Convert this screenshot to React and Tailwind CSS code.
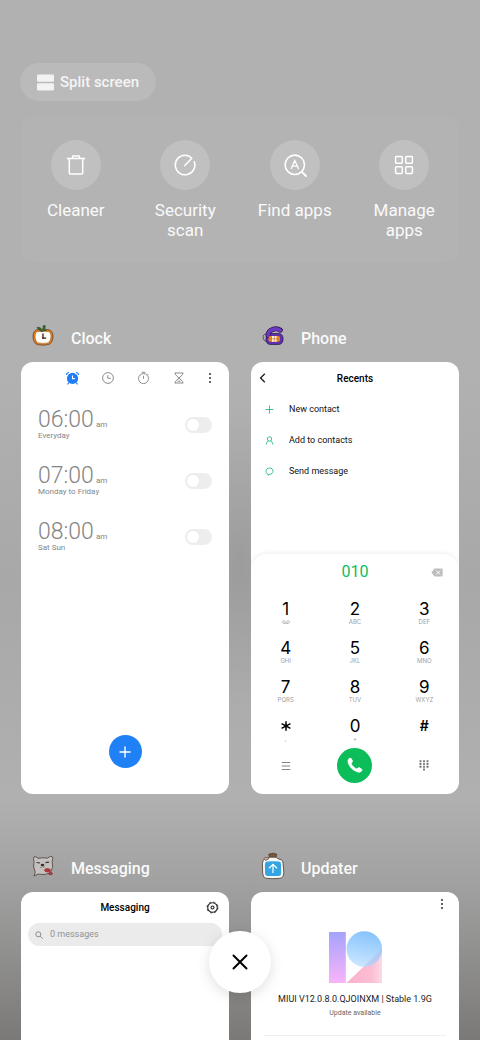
import React, { useState } from "react";

const shortcuts = [
  { label: "Cleaner", Icon: TrashIcon },
  { label: "Security scan", Icon: ScanIcon },
  { label: "Find apps", Icon: FindIcon },
  { label: "Manage apps", Icon: GridIcon },
];

const initialAlarms = [
  { id: 1, time: "06:00", period: "am", repeat: "Everyday", on: false },
  { id: 2, time: "07:00", period: "am", repeat: "Monday to Friday", on: false },
  { id: 3, time: "08:00", period: "am", repeat: "Sat Sun", on: false },
];

const keys = [
  { digit: "1", letters: "voicemail" },
  { digit: "2", letters: "ABC" },
  { digit: "3", letters: "DEF" },
  { digit: "4", letters: "GHI" },
  { digit: "5", letters: "JKL" },
  { digit: "6", letters: "MNO" },
  { digit: "7", letters: "PQRS" },
  { digit: "8", letters: "TUV" },
  { digit: "9", letters: "WXYZ" },
  { digit: "*", letters: "," },
  { digit: "0", letters: "+" },
  { digit: "#", letters: "" },
];

export default function App() {
  return (
    <div className="relative h-screen overflow-hidden bg-[linear-gradient(to_bottom,#b1b1b1_0%,#b1b1b1_36%,#a8a8a8_56%,#b0b0b0_77%,#a3a3a3_84%,#8f8f8e_92%,#7b7977_100%)] font-[Roboto,sans-serif]">
      <div className="min-h-full bg-[radial-gradient(60px_150px_at_50%_560px,rgba(0,0,0,0.08),transparent)] px-[21px] pt-[63px]">
        <button className="-ml-px flex h-[38px] items-center gap-1.5 rounded-full bg-[#bababa] px-[17px] text-[15px] font-medium text-[#f4f4f4]">
          <svg width="17" height="17" viewBox="0 0 17 17" fill="#f2f2f2">
            <rect x="0" y="0.5" width="17" height="7.3" rx="1.2" />
            <rect x="0" y="9.2" width="17" height="7.3" rx="1.2" />
          </svg>
          Split screen
        </button>

        <nav className="mt-4 grid h-[145px] grid-cols-4 rounded-xl bg-[#b3b3b3] pt-[23px]">
          {shortcuts.map(({ label, Icon }) => (
            <button
              key={label}
              className="flex flex-col items-center gap-2.5 px-3 text-[17px] leading-5 text-[#fafafa]"
            >
              <span className="flex size-[50px] shrink-0 items-center justify-center rounded-full bg-[#c0c0c0]">
                <Icon />
              </span>
              {label}
            </button>
          ))}
        </nav>

        <main className="mt-[60px] grid grid-cols-2 gap-x-[22px] gap-y-[58px]">
          <RecentApp name="Clock" icon={<PumpkinIcon />}>
            <ClockScreen />
          </RecentApp>
          <RecentApp name="Phone" icon={<TelephoneIcon />}>
            <PhoneScreen />
          </RecentApp>
          <RecentApp name="Messaging" icon={<BearIcon />}>
            <MessagingScreen />
          </RecentApp>
          <RecentApp name="Updater" icon={<BottleIcon />}>
            <UpdaterScreen />
          </RecentApp>
        </main>
      </div>

      {/* Clear all */}
      <button
        aria-label="Close all apps"
        className="absolute bottom-[47px] left-1/2 flex size-[62px] -translate-x-1/2 items-center justify-center rounded-full bg-white shadow-[0_3px_14px_rgba(0,0,0,0.13)]"
      >
        <svg width="16" height="16" viewBox="0 0 16 16" stroke="#000" strokeWidth="2" strokeLinecap="round">
          <path d="M1.5 1.5 14.5 14.5M14.5 1.5 1.5 14.5" />
        </svg>
      </button>
    </div>
  );
}

function RecentApp({ name, icon, children }) {
  return (
    <section>
      <h2 className="mb-1.5 flex h-[34px] items-center gap-4 pl-2.5 text-[16px] font-medium text-[#fafafa]">
        <span className="flex w-6 justify-center pb-1.5">{icon}</span>
        {name}
      </h2>
      <div className="flex aspect-[13/27] flex-col overflow-hidden rounded-xl bg-white">
        {children}
      </div>
    </section>
  );
}

/* ---------- Clock ---------- */

function ClockScreen() {
  const [alarms, setAlarms] = useState(initialAlarms);

  const toggle = (id) =>
    setAlarms(alarms.map((a) => (a.id === id ? { ...a, on: !a.on } : a)));

  return (
    <>
      <div className="flex h-8 items-center justify-between pl-11 pr-3 text-[#8c8c8c]">
        <div className="flex gap-[21px]">
          <button aria-label="Alarm">
            <svg width="15" height="14" viewBox="0 0 14 14">
              <circle cx="7" cy="7.4" r="5.6" fill="#1f7df5" />
              <path d="M1 3.4Q1.6 2 3 1.5M13 3.4Q12.4 2 11 1.5M3.2 11.8 2.3 13M10.8 11.8l.9 1.2" stroke="#1f7df5" strokeWidth="1.2" fill="none" strokeLinecap="round" />
              <path d="M7 4.6v3h2.4" stroke="#fff" strokeWidth="1.1" fill="none" />
            </svg>
          </button>
          <button aria-label="World clock">
            <svg width="14" height="14" viewBox="0 0 14 14" fill="none" stroke="currentColor">
              <circle cx="7" cy="7" r="5.4" />
              <path d="M6.8 4.2v3.1h3" />
            </svg>
          </button>
          <button aria-label="Stopwatch">
            <svg width="15" height="14" viewBox="0 0 14 14" fill="none" stroke="currentColor">
              <circle cx="7" cy="7.6" r="5" />
              <path d="M5.2 1.3h3.600M7 4.8v3M11 2.9l.9.9" />
            </svg>
          </button>
          <button aria-label="Timer">
            <svg width="14" height="14" viewBox="0 0 14 14" fill="none" stroke="currentColor">
              <path d="M2.6 2h8.8M2.6 12h8.8M3.4 2v1.6L10.6 10.4V12M10.6 2v1.6L3.4 10.4V12M5.4 10.2h3.2" />
            </svg>
          </button>
        </div>
        <MoreButton />
      </div>

      <ul className="flex flex-col gap-6 px-[17px] pt-[15px] text-[#858585]">
        {alarms.map((alarm) => (
          <li key={alarm.id}>
            <label className="flex h-8 items-center justify-between">
              <span>
                <span className="flex items-baseline gap-0.5">
                  <span className="text-[23px] font-light leading-[21px]">{alarm.time}</span>
                  <span className="text-[8px] leading-none">{alarm.period}</span>
                </span>
                <span className="block text-[8px] leading-[11px]">{alarm.repeat}</span>
              </span>
              <input
                type="checkbox"
                checked={alarm.on}
                onChange={() => toggle(alarm.id)}
                className="h-4 w-[27px] appearance-none rounded-full bg-[#ededed] p-0.5 before:block before:size-3 before:rounded-full before:bg-white checked:bg-[#1f7df5] checked:before:ml-[11px]"
              />
            </label>
          </li>
        ))}
      </ul>

      <button
        aria-label="Add alarm"
        className="mx-auto mb-[26px] mt-auto flex size-[33px] items-center justify-center rounded-full bg-[#2080f6]"
      >
        <svg width="12" height="12" viewBox="0 0 12 12" stroke="#fff" strokeWidth="1.4">
          <path d="M6 .5v11M.5 6h11" />
        </svg>
      </button>
    </>
  );
}

function MoreButton() {
  return (
    <button aria-label="More options">
      <svg width="14" height="14" viewBox="0 0 14 14" fill="#1a1a1a">
        <circle cx="7" cy="3" r="0.9" />
        <circle cx="7" cy="7" r="0.9" />
        <circle cx="7" cy="11" r="0.9" />
      </svg>
    </button>
  );
}

/* ---------- Phone ---------- */

function PhoneScreen() {
  const [number, setNumber] = useState("010");

  return (
    <>
      <div className="grid h-8 grid-cols-[1fr_auto_1fr] items-center px-2 text-[10px] font-medium text-black">
        <button aria-label="Back">
          <svg width="8" height="10" viewBox="0 0 8 10" fill="none" stroke="#111" strokeWidth="1.2">
            <path d="M5.8.8 1.5 5l4.3 4.2" />
          </svg>
        </button>
        <h3>Recents</h3>
      </div>

      <div className="flex flex-col text-[9px] text-[#111]">
        <button className="flex h-[31px] items-center gap-[15px] pl-3.5">
          <svg width="9" height="9" viewBox="0 0 9 9" stroke="#2cba83" strokeWidth="0.9">
            <path d="M4.5.5v8M.5 4.5h8" />
          </svg>
          New contact
        </button>
        <button className="flex h-[31px] items-center gap-[15px] pl-3.5">
          <svg width="9" height="9" viewBox="0 0 9 9" fill="none" stroke="#2cba83" strokeWidth="0.9">
            <circle cx="4.5" cy="3" r="2.2" />
            <path d="M1.2 8.5C1.300 6.300 2.600 5.200 3.600 5M7.800 8.500C7.700 6.300 6.400 5.200 5.400 5" />
          </svg>
          Add to contacts
        </button>
        <button className="flex h-[31px] items-center gap-[15px] pl-3.5">
          <svg width="9" height="9" viewBox="0 0 9 9" fill="none" stroke="#2cba83" strokeWidth="0.9">
            <path d="M3.1 7.2C1.700 6.700 1 5.500 1 4.200 1 2.300 2.500 1 4.500 1S8 2.300 8 4.200 6.500 7.300 4.800 7.300L3 8.200Z" />
          </svg>
          Send message
        </button>
      </div>

      <div className="mt-auto rounded-t-2xl pb-[11px] shadow-[0_-1px_5px_rgba(0,0,0,0.07)]">
        <div className="grid h-9 grid-cols-3 items-center">
          <output className="col-start-2 text-center text-[16px] text-[#0fbd5b]">{number}</output>
          <button
            aria-label="Delete digit"
            onClick={() => setNumber(number.slice(0, -1))}
            className="mr-4 justify-self-end"
          >
            <svg width="12" height="9" viewBox="0 0 12 9">
              <path d="M3.6.6h7.2q.8 0 .8.8v6.2q0 .8-.8.8H3.600L.4 4.500Z" fill="#bdbdbd" />
              <path d="M5.200 2.500l4 4M9.200 2.500l-4 4" stroke="#fff" strokeWidth="1" />
            </svg>
          </button>
        </div>

        <div className="mt-0.5 grid grid-cols-3">
          {keys.map(({ digit, letters }) => (
            <button
              key={digit}
              onClick={() => setNumber(number + digit)}
              className="flex h-[39px] flex-col items-center pt-2 font-[Inter,sans-serif] text-black"
            >
              {digit === "*" ? (
                <svg aria-label="*" width="18" height="18" viewBox="0 0 18 18" stroke="#000" strokeWidth="1.5">
                  <path d="M9 4.200v9.600M4.600 6.600l8.800 4.800M13.400 6.600l-8.800 4.800" />
                </svg>
              ) : (
                <span className={digit === "#" ? "text-[14px] font-semibold leading-[18px]" : "text-[17px] leading-[18px]"}>
                  {digit}
                </span>
              )}
              {letters === "voicemail" ? (
                <svg width="8" height="8" viewBox="0 0 8 8" fill="none" stroke="#a8a8a8" strokeWidth="0.7">
                  <circle cx="1.900" cy="4" r="1.400" />
                  <circle cx="6.100" cy="4" r="1.400" />
                  <path d="M1.900 5.400h4.200" />
                </svg>
              ) : (
                <span className="text-[6px] leading-2 text-[#a0a0a0]">{letters}</span>
              )}
            </button>
          ))}
        </div>

        <div className="grid grid-cols-3 items-center justify-items-center">
          <button aria-label="Menu">
            <svg width="10" height="10" viewBox="0 0 10 10" stroke="#777" strokeWidth="0.9">
              <path d="M.8 1.500h8.400M.8 5h8.400M.8 8.500h8.400" />
            </svg>
          </button>
          <button
            aria-label="Call"
            className="flex size-[35px] items-center justify-center rounded-full bg-[#0cbd5a]"
          >
            <svg width="19" height="19" viewBox="0 0 24 24" fill="#fff">
              <path d="M5.200 2.800c.9-.9 2-.8 2.700.1l1.700 2.600c.5.800.4 1.600-.2 2.300l-.9 1c-.3.400-.3.800 0 1.300 1.400 2.500 3.200 4.300 5.600 5.600.5.300.9.200 1.300-.1l1.100-.9c.7-.5 1.400-.6 2.200-.1l2.600 1.700c.9.700 1 1.800.1 2.700-1.500 1.600-3.300 2.300-5.600 1.600C9.900 18.700 5.300 14 3.500 8.300 2.800 6.100 3.500 4.300 5.200 2.800Z" />
            </svg>
          </button>
          <button aria-label="Hide keypad">
            <svg width="10" height="11" viewBox="0 0 10 11" fill="#777">
              {[1.5, 5, 8.5].map((x) =>
                [1.2, 4, 6.8].map((y) => (
                  <rect key={`${x}-${y}`} x={x - 1} y={y - 1} width="2" height="2" rx="0.4" />
                ))
              )}
              <rect x="4" y="8.600" width="2" height="2" rx="0.4" />
            </svg>
          </button>
        </div>
      </div>
    </>
  );
}

/* ---------- Messaging ---------- */

function MessagingScreen() {
  return (
    <>
      <div className="grid h-[31px] grid-cols-[1fr_auto_1fr] items-center px-2.5 text-[10px] font-medium text-black">
        <h3 className="col-start-2">Messaging</h3>
        <button aria-label="Settings" className="justify-self-end">
          <svg width="13" height="13" viewBox="0 0 13 13" fill="none" stroke="#222">
            <circle cx="6.5" cy="6.5" r="4.8" strokeWidth="1.1" />
            <circle cx="6.5" cy="6.5" r="5.5" strokeWidth="0.8" strokeDasharray="2.3 2.019" />
            <circle cx="6.5" cy="6.5" r="1.5" strokeWidth="1.1" />
          </svg>
        </button>
      </div>
      <label className="mx-[7px] flex h-[23px] items-center gap-[7px] rounded-full bg-[#ebebeb] px-[7px]">
        <svg width="8" height="8" viewBox="0 0 8 8" fill="none" stroke="#8a8a8a" strokeWidth="1">
          <circle cx="3.3" cy="3.3" r="2.5" />
          <path d="M5.2 5.2 7.6 7.6" />
        </svg>
        <input
          type="search"
          aria-label="Search messages"
          placeholder="0 messages"
          className="min-w-0 flex-1 bg-transparent text-[9px] outline-none placeholder:text-[#929292]"
        />
      </label>
    </>
  );
}

/* ---------- Updater ---------- */

function UpdaterScreen() {
  return (
    <>
      <div className="flex h-6 items-center justify-end px-2.5">
        <MoreButton />
      </div>
      <svg className="mx-auto mt-[15px]" width="53" height="52" viewBox="0 0 53 52">
        <defs>
          <linearGradient id="bar" x1="0" y1="0" x2="0" y2="1">
            <stop offset="0" stopColor="#a5a3fc" />
            <stop offset="1" stopColor="#f8b4fa" />
          </linearGradient>
          <linearGradient id="ball" x1="0.6" y1="0" x2="0.4" y2="1">
            <stop offset="0" stopColor="#86c3fd" />
            <stop offset="1" stopColor="#cbe7ff" />
          </linearGradient>
          <linearGradient id="foot" x1="0" y1="0" x2="1" y2="0">
            <stop offset="0" stopColor="#fbb2cc" />
            <stop offset="0.7" stopColor="#fcbdd3" />
            <stop offset="1" stopColor="#fdd9e5" />
          </linearGradient>
          <clipPath id="ballClip">
            <circle cx="35.3" cy="18" r="17.8" />
          </clipPath>
        </defs>
        <rect x="0" y="1" width="16.8" height="51" fill="url(#bar)" />
        <path d="M53 18v34H17.5Z" fill="url(#foot)" />
        <circle cx="35.3" cy="18" r="17.8" fill="url(#ball)" />
        <path d="M53 18v34H17.5Z" fill="#b9b4e6" opacity="0.45" clipPath="url(#ballClip)" />
      </svg>
      <p className="mt-2.5 text-center text-[9px] leading-3 text-[#1c1c1c]">
        MIUI V12.0.8.0.QJOINXM | Stable 1.9G
      </p>
      <p className="mt-0.5 text-center text-[7px] leading-3 text-[#666]">Update available</p>
      <hr className="mx-[13px] mt-4 border-[#efefef]" />
    </>
  );
}

/* ---------- Shortcut icons ---------- */

function TrashIcon() {
  return (
    <svg width="24" height="24" viewBox="0 0 24 24" fill="none" stroke="#fff" strokeWidth="1.5" strokeLinejoin="round">
      <path d="M2.800 5.600h18.400M8.600 5.400V2.900h6.800v2.500M5.300 5.800v14.100q0 1 1 1h11.400q1 0 1-1V5.800" />
    </svg>
  );
}

function ScanIcon() {
  return (
    <svg width="24" height="24" viewBox="0 0 24 24" fill="none" stroke="#fff" strokeWidth="1.5" strokeLinecap="round" strokeLinejoin="round">
      <path d="M11.800 12.600 18.800 5.300C17 3.300 14.700 2.200 12 2.200a9.800 9.800 0 1 0 9.300 6.500" />
    </svg>
  );
}

function FindIcon() {
  return (
    <svg width="24" height="24" viewBox="0 0 24 24" fill="none" stroke="#fff" strokeWidth="1.6" strokeLinecap="round">
      <circle cx="11.8" cy="11.8" r="9.7" />
      <path d="M18.800 18.800 23 23" strokeWidth="1.9" />
      <path d="M8.200 15.600 11.800 7.600 15.400 15.600M9.600 13.200h4.400" strokeWidth="1.3" />
    </svg>
  );
}

function GridIcon() {
  return (
    <svg width="24" height="24" viewBox="0 0 24 24" fill="none" stroke="#fff" strokeWidth="1.5">
      <rect x="3.6" y="3.6" width="6.7" height="6.7" rx="1" />
      <rect x="13.7" y="3.6" width="6.7" height="6.7" rx="1" />
      <rect x="3.6" y="13.7" width="6.7" height="6.7" rx="1" />
      <rect x="13.7" y="13.7" width="6.7" height="6.7" rx="1" />
    </svg>
  );
}

/* ---------- App icons ---------- */

function PumpkinIcon() {
  return (
    <svg width="22" height="22" viewBox="0 0 22 22">
      <path d="M10.4 5.500C7 3.600 1.200 4 1 11c-.1 6.200 3.200 9.400 7 8.800q3 .9 6 0c3.800.5 7-2.600 7-8.800-.2-7-6-7.400-10.600-5.500Z" fill="#e77a1a" stroke="#5b3a1c" strokeWidth="0.7" />
      <path d="M5.500 6.800q5.500-1.200 11 0 2.600.8 2.400 5-.2 4-2.400 5.900-5.500 1.500-11 0-2.200-1.900-2.400-5.900-.2-4.200 2.400-5Z" fill="#fffdf8" stroke="#6d4a2b" strokeWidth="0.4" />
      <path d="M5.200 2.200Q9 2 9.700 4.600L11 4l.3-3.600 2 .3-.4 3.500 1.300 1.300-2.700.4-2 1L8 5.200Q5.400 4.800 5.200 2.200Z" fill="#3f6a2c" stroke="#28371b" strokeWidth="0.5" />
      <path d="M11 8.500v4.600h3.200" stroke="#3b1f1a" strokeWidth="1.3" fill="none" />
      <circle cx="11" cy="13" r="1.1" fill="#7a2a22" />
    </svg>
  );
}

function TelephoneIcon() {
  return (
    <svg width="22" height="20" viewBox="0 0 22 20">
      <path d="M4 8.200Q.8 8 1.200 12q.3 2.600 3 3.600" fill="none" stroke="#4d4856" strokeWidth="0.9" />
      <rect x="4" y="7.500" width="17" height="11" rx="4.500" fill="#5e30b0" stroke="#251544" strokeWidth="0.7" />
      <path d="M18.300 4.200Q15 2 11 3.300 6.200 4.800 6 9.500" fill="none" stroke="#251544" strokeWidth="5" strokeLinecap="round" />
      <path d="M18.300 4.200Q15 2 11 3.300 6.200 4.800 6 9.500" fill="none" stroke="#6a38c2" strokeWidth="3.6" strokeLinecap="round" />
      <rect x="6.500" y="10" width="11.500" height="5.800" rx="2" fill="#ef8a1d" />
      <path d="M10 10h4.500v5.800H10Z" fill="#fff5df" />
      <path d="M7 12.900h10.500M12.300 10v5.800" stroke="#a65d2a" strokeWidth="0.6" />
    </svg>
  );
}

function BearIcon() {
  return (
    <svg width="22" height="22" viewBox="0 0 22 22">
      <path d="M1.500 3.500Q1.300 1.300 3.500 1.700L6 3.300q5-1 9.500-.2L18.300 1.300q2.400-.2 2.500 2-.1 2-.7 3.200 1.300 5.700-.6 9.200-1.600 3.300-6 3.600-4 .5-7.200-.3L2 21l1.200-3.800Q.8 12 2 6.500Z" fill="#c4c1bf" stroke="#514b48" strokeWidth="0.9" />
      <path d="M4.500 7.500 8 8M13.500 7.600l3.500-.5" stroke="#3d3633" strokeWidth="1.1" />
      <ellipse cx="10.500" cy="10" rx="1.800" ry="1.200" fill="#362f2d" />
      <path d="M8 12.300q1.500.8 2.500-.8 1.200 1.500 2.600.5" fill="none" stroke="#625a56" strokeWidth="0.6" />
      <ellipse cx="15.500" cy="15.300" rx="3" ry="1.700" fill="#c63030" stroke="#6b2424" strokeWidth="0.5" />
      <ellipse cx="18.500" cy="18.600" rx="2" ry="1.200" fill="#c63030" stroke="#6b2424" strokeWidth="0.5" />
    </svg>
  );
}

function BottleIcon() {
  return (
    <svg width="24" height="28" viewBox="0 0 24 28">
      <path d="M8.500 5.500 7.600 2.200Q12 .2 15.800 2.200L15 5.500Z" fill="#79583a" stroke="#3d2d21" strokeWidth="0.6" />
      <path d="M3.500 7.500Q8 6.800 8.700 5.200h6.400q1 1.800 5 2.500 2.100 1 2 4l.7 9q-.2 5.300-4 5.600-7.300.8-13.800 0Q1.600 25.600 1.700 21L1.400 11.500q0-3.200 2.100-4Z" fill="#faf8f4" stroke="#554b43" strokeWidth="0.9" />
      <path d="M6 9.600q6-.7 12 0 2 .3 2 2.600l.2 9q-.1 2.500-2.300 2.700-6 .4-11.600 0Q4 23.700 4 21.200l-.1-9q.1-2.400 2.100-2.600Z" fill="#34a5e2" />
      <path d="M12 21v-8.500M8 16.200l4-3.900 4 3.900" stroke="#fff" strokeWidth="1.2" fill="none" />
      <path d="M3 6.500q1-2.500 3-.8 2.200-.8 1.500 1.400L4.500 8.500Z" fill="#d9aba0" stroke="#554b43" strokeWidth="0.7" />
    </svg>
  );
}
